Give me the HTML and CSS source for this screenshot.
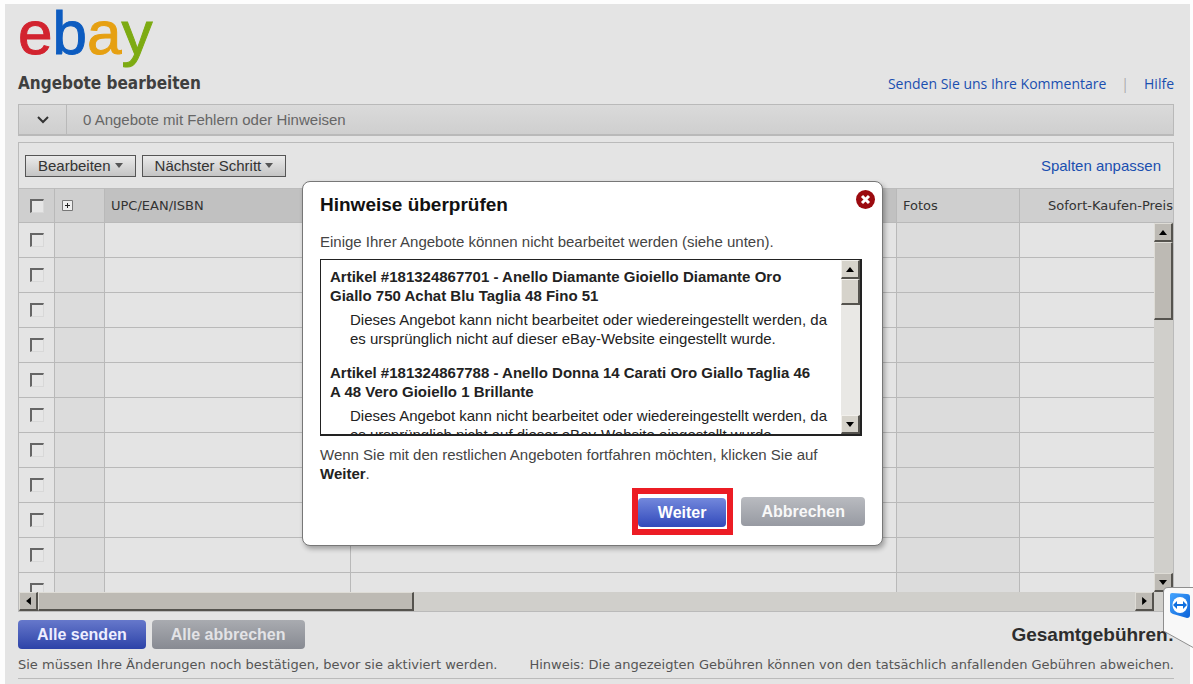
FILE: index.html
```html
<!DOCTYPE html>
<html lang="de">
<head>
<meta charset="utf-8">
<title>Angebote bearbeiten</title>
<link rel="stylesheet" href="styles.css">
</head>
<body>
<div class="page">
  <header class="masthead">
    <div class="logo" role="img" aria-label="ebay"><span class="logo-e">e</span><span class="logo-b">b</span><span class="logo-a">a</span><span class="logo-y">y</span></div>
    <div class="title-row">
      <h1 class="title">Angebote bearbeiten</h1>
      <nav class="links"><a href="#">Senden Sie uns Ihre Kommentare</a><span class="sep">|</span><a href="#">Hilfe</a></nav>
    </div>
  </header>

  <section class="status">
    <button class="status-toggle" type="button" aria-label="Fehler anzeigen"><svg width="14" height="10" viewBox="0 0 14 10"><path d="M2 2l5 5 5-5" fill="none" stroke="#333" stroke-width="2"/></svg></button>
    <span class="status-text">0 Angebote mit Fehlern oder Hinweisen</span>
  </section>

  <section class="panel">
    <div class="toolbar">
      <button class="tool" type="button">Bearbeiten<span class="caret"></span></button>
      <button class="tool" type="button">Nächster Schritt<span class="caret"></span></button>
      <a class="columns-link" href="#">Spalten anpassen</a>
    </div>
    <div class="grid-view">
      <table class="offers">
        <colgroup><col class="c-check"><col class="c-plus"><col class="c-upc"><col><col class="c-foto"><col class="c-price"></colgroup>
        <thead>
          <tr><th><input type="checkbox" aria-label="Alle auswählen"></th><th><button class="expand" type="button" aria-label="Alle erweitern"><svg width="11" height="11" viewBox="0 0 11 11"><path d="M.5.5h10v10H.5z" fill="#eee" stroke="#777"/><path d="M3 5.500h5M5.500 3v5" stroke="#222"/></svg></button></th><th class="label sorted">UPC/EAN/ISBN</th><th class="sorted"></th><th class="label">Fotos</th><th class="label price">Sofort-Kaufen-Preis</th></tr>
        </thead>
        <tbody>
          <tr><td><input type="checkbox" aria-label="Angebot 1"></td><td class="shade"></td><td></td><td></td><td class="shade"></td><td></td></tr>
          <tr><td><input type="checkbox" aria-label="Angebot 2"></td><td class="shade"></td><td></td><td></td><td class="shade"></td><td></td></tr>
          <tr><td><input type="checkbox" aria-label="Angebot 3"></td><td class="shade"></td><td></td><td></td><td class="shade"></td><td></td></tr>
          <tr><td><input type="checkbox" aria-label="Angebot 4"></td><td class="shade"></td><td></td><td></td><td class="shade"></td><td></td></tr>
          <tr><td><input type="checkbox" aria-label="Angebot 5"></td><td class="shade"></td><td></td><td></td><td class="shade"></td><td></td></tr>
          <tr><td><input type="checkbox" aria-label="Angebot 6"></td><td class="shade"></td><td></td><td></td><td class="shade"></td><td></td></tr>
          <tr><td><input type="checkbox" aria-label="Angebot 7"></td><td class="shade"></td><td></td><td></td><td class="shade"></td><td></td></tr>
          <tr><td><input type="checkbox" aria-label="Angebot 8"></td><td class="shade"></td><td></td><td></td><td class="shade"></td><td></td></tr>
          <tr><td><input type="checkbox" aria-label="Angebot 9"></td><td class="shade"></td><td></td><td></td><td class="shade"></td><td></td></tr>
          <tr><td><input type="checkbox" aria-label="Angebot 10"></td><td class="shade"></td><td></td><td></td><td class="shade"></td><td></td></tr>
          <tr><td><input type="checkbox" aria-label="Angebot 11"></td><td class="shade"></td><td></td><td></td><td class="shade"></td><td></td></tr>
        </tbody>
      </table>
      <div class="vbar grid-vbar">
        <button class="arrow" type="button" aria-label="Nach oben"><svg width="8" height="5" viewBox="0 0 10 6"><path d="M5 0l5 6H0z"/></svg></button>
        <div class="thumb"></div>
        <button class="arrow end" type="button" aria-label="Nach unten"><svg width="8" height="5" viewBox="0 0 10 6"><path d="M5 6L0 0h10z"/></svg></button>
      </div>
    </div>
    <div class="hbar">
      <button class="arrow" type="button" aria-label="Nach links"><svg width="5" height="8" viewBox="0 0 6 10"><path d="M0 5l6-5v10z"/></svg></button>
      <div class="thumb"></div>
      <button class="arrow end" type="button" aria-label="Nach rechts"><svg width="5" height="8" viewBox="0 0 6 10"><path d="M6 5L0 0v10z"/></svg></button>
    </div>
  </section>

  <footer class="footer">
    <div class="actions">
      <button class="btn primary" type="button">Alle senden</button>
      <button class="btn" type="button">Alle abbrechen</button>
      <strong class="fees">Gesamtgebühren:</strong>
    </div>
    <div class="notes">
      <span>Sie müssen Ihre Änderungen noch bestätigen, bevor sie aktiviert werden.</span>
      <span>Hinweis: Die angezeigten Gebühren können von den tatsächlich anfallenden Gebühren abweichen.</span>
    </div>
  </footer>
</div>

<div class="overlay">
  <div class="dialog" role="dialog" aria-labelledby="dialog-title">
    <div class="dialog-head">
      <h2 class="dialog-title" id="dialog-title">Hinweise überprüfen</h2>
      <button class="close" type="button" aria-label="Schließen"><svg width="19" height="19" viewBox="0 0 19 19"><circle cx="9.500" cy="9.500" r="9.500" fill="#9b0a0f"/><path d="M6 6l7 7M13 6l-7 7" stroke="#fff" stroke-width="3"/></svg></button>
    </div>
    <p class="dialog-text">Einige Ihrer Angebote können nicht bearbeitet werden (siehe unten).</p>
    <div class="issues">
      <dl class="issue-list">
        <dt>Artikel #181324867701 - Anello Diamante Gioiello Diamante Oro<br>Giallo 750 Achat Blu Taglia 48 Fino 51</dt>
        <dd>Dieses Angebot kann nicht bearbeitet oder wiedereingestellt werden, da<br>es ursprünglich nicht auf dieser eBay-Website eingestellt wurde.</dd>
        <dt>Artikel #181324867788 - Anello Donna 14 Carati Oro Giallo Taglia 46<br>A 48 Vero Gioiello 1 Brillante</dt>
        <dd>Dieses Angebot kann nicht bearbeitet oder wiedereingestellt werden, da<br>es ursprünglich nicht auf dieser eBay-Website eingestellt wurde.</dd>
      </dl>
      <div class="vbar issue-vbar">
        <button class="arrow" type="button" aria-label="Nach oben"><svg width="8" height="5" viewBox="0 0 10 6"><path d="M5 0l5 6H0z"/></svg></button>
        <div class="thumb"></div>
        <button class="arrow end" type="button" aria-label="Nach unten"><svg width="8" height="5" viewBox="0 0 10 6"><path d="M5 6L0 0h10z"/></svg></button>
      </div>
    </div>
    <p class="dialog-text">Wenn Sie mit den restlichen Angeboten fortfahren möchten, klicken Sie auf<br><strong>Weiter</strong>.</p>
    <div class="dialog-actions">
      <div class="marker"><button class="btn primary" type="button">Weiter</button></div>
      <button class="btn" type="button">Abbrechen</button>
    </div>
  </div>
</div>

<div class="remote-tab">
  <svg width="30" height="62" viewBox="0 0 30 62">
    <defs><linearGradient id="tile" x2="1" y2="1"><stop stop-color="#45a5ff"/><stop offset="1" stop-color="#0a62d8"/></linearGradient></defs>
    <path d="M31 .5H5Q.5.500.5 5v39L31 61z" fill="#f8f8f8" stroke="#8e8e8e"/>
    <path d="M9 6l15 1q3 0 3 3v18q0 3-3 3L10 27q-3-1-3-3V8q0-2 2-2z" fill="url(#tile)"/>
    <ellipse cx="17" cy="18" rx="7.500" ry="8" fill="#fff"/>
    <path d="M10 18l4-4v3h6v-3l4 4-4 4v-3h-6v3z" fill="#0f6fdf"/>
  </svg>
</div>
</body>
</html>
```
FILE: styles.css
```css
* { box-sizing: border-box; }

body {
  margin: 0;
  background: #fdfdfd;
  font-family: "Liberation Sans", Arial, sans-serif;
  font-size: 15px;
  color: #444;
  overflow: hidden;
}

button { font-family: inherit; cursor: pointer; }
a { color: #1a4fb0; text-decoration: none; }

.page {
  margin: 4px 3px 0 5px;
  padding: 0 16px 0 13px;
  min-height: 100vh;
  background: #e4e4e4;
}

/* masthead */
.logo { height: 64px; font-size: 62px; line-height: 58px; -webkit-text-stroke: 1px currentColor; }
.logo-e { color: #d2232f; }
.logo-b { color: #0d5cc0; }
.logo-a { color: #e6a012; }
.logo-y { color: #7dab12; }

.title-row { display: flex; justify-content: space-between; align-items: center; height: 30px; }
.title {
  margin: 0;
  font: bold 17px "DejaVu Sans Condensed", "DejaVu Sans", sans-serif;
  color: #3f3f3f;
}
.links { font-family: "Open Sans", sans-serif; font-size: 14px; }
.sep { margin: 0 15px; color: #aaa; }

/* status strip */
.status {
  display: flex;
  align-items: stretch;
  height: 32px;
  margin: 6px 0;
  border: 1px solid #b9b9b9;
  border-bottom-width: 2px;
  background: linear-gradient(#dadada, #cfcfcf);
}
.status-toggle {
  display: flex;
  align-items: center;
  justify-content: center;
  width: 48px;
  padding: 0;
  border: 0;
  border-right: 1px solid #b9b9b9;
  background: none;
}
.status-text { padding-left: 16px; line-height: 30px; color: #666; }

/* table panel */
.panel { border: 1px solid #bababa; }
.toolbar { display: flex; align-items: center; gap: 6px; height: 45px; padding: 0 12px 0 6px; }
.tool {
  display: flex;
  align-items: center;
  gap: 4px;
  height: 22px;
  padding: 0 12px;
  border: 1px solid #555;
  background: linear-gradient(#ebebeb, #c4c4c4);
  font-size: 15px;
  color: #333;
}
.caret { border: 4px solid transparent; border-top: 5px solid #555; border-bottom: 0; }
.columns-link { margin-left: auto; }

.grid-view {
  display: grid;
  grid-template: 35px 369px / 1fr 19px;
  overflow: hidden;
}
.offers {
  grid-area: 1 / 1 / 3 / 3;
  align-self: start;
  width: 100%;
  table-layout: fixed;
  border-collapse: separate;
  border-spacing: 0;
}
.c-check { width: 36px; }
.c-plus { width: 50px; }
.c-upc { width: 246px; }
.c-foto { width: 123px; }
.c-price { width: 153px; }
.offers th, .offers td {
  height: 35px;
  padding: 0;
  border-right: 1px solid #b9b9b9;
  border-bottom: 1px solid #b9b9b9;
  text-align: center;
  vertical-align: middle;
}
.offers tr > :last-child { border-right: 0; }
.offers th { border-top: 1px solid #bcbcbc; background: #cfcfcf; }
.offers th.sorted { background: #c1c1c1; }
.offers th.label {
  padding-left: 6px;
  font: 13px "DejaVu Sans", Verdana, sans-serif;
  color: #333;
  text-align: left;
}
.offers th.price { padding: 0; text-align: right; white-space: nowrap; }
.shade { background: #dcdcdc; }
.offers input {
  appearance: none;
  display: block;
  width: 14px;
  height: 14px;
  margin: 0 auto;
  border: 1px solid #d8d8d8;
  border-top: 2px solid #666;
  border-left: 2px solid #666;
  background: #e6e6e6;
}
.expand { display: block; margin-left: 7px; padding: 0; border: 0; background: none; line-height: 0; }

/* scroll bars */
.vbar, .hbar { display: flex; background: #d0cfcb; }
.vbar { flex-direction: column; }
.arrow {
  display: flex;
  flex: none;
  align-items: center;
  justify-content: center;
  width: 19px;
  height: 19px;
  padding: 0;
}
.arrow, .thumb {
  border: 1px solid #dedcd6;
  border-right: 2px solid #55534e;
  border-bottom: 2px solid #55534e;
  background: #bdbab4;
}
.end { margin: auto 0 0; }
.grid-vbar { grid-area: 2 / 2; }
.grid-vbar .thumb { height: 78px; }
.hbar { height: 19px; padding-right: 19px; }
.hbar .thumb { width: 376px; }
.hbar .end { margin: 0 0 0 auto; }

/* footer */
.actions { display: flex; gap: 6px; height: 45px; align-items: center; }
.btn {
  height: 29px;
  padding: 0 19px;
  border: 0;
  border-radius: 4px;
  background: linear-gradient(#a9abb0, #878a92);
  font-size: 16px;
  font-weight: bold;
  color: #e3e3e6;
}
.primary { background: linear-gradient(#6678cb, #2d43a8); color: #eef; }
.fees { margin-left: auto; font-size: 19px; color: #2d2d2d; }
.notes {
  display: flex;
  justify-content: space-between;
  height: 22px;
  border-bottom: 1px solid #bbb;
  font: 13px "DejaVu Sans", Verdana, sans-serif;
  color: #555;
  white-space: nowrap;
}

/* dialog */
.overlay {
  position: absolute;
  inset: 181px 8px auto 0;
  display: flex;
  justify-content: center;
}
.dialog {
  width: 581px;
  padding: 8px 17px 10px;
  border: 1px solid #777;
  border-radius: 8px;
  background: #fff;
  box-shadow: 2px 3px 5px rgba(0, 0, 0, .3);
}
.dialog-head { display: flex; justify-content: space-between; height: 42px; }
.dialog-title { margin: 0; font-size: 19px; line-height: 30px; color: #111; }
.close { align-self: flex-start; margin-right: -10px; padding: 0; border: 0; background: none; line-height: 0; }
.dialog-text { margin: 0; line-height: 19px; }
.dialog-text strong { color: #222; }
.issues {
  display: flex;
  height: 177px;
  width: 542px;
  max-width: 100%;
  margin: 8px 0 9px;
  border: 1px solid #222;
  border-right-width: 2px;
  border-bottom-width: 2px;
  overflow: hidden;
}
.issue-list { flex: 1; margin: 0; padding: 7px 0 0 9px; line-height: 19px; color: #222; white-space: nowrap; }
.issue-list dt { font-weight: bold; }
.issue-list dd { margin: 5px 0 15px 20px; }
.issue-vbar { width: 19px; background: #e9e8e5; }
.issue-vbar .arrow, .issue-vbar .thumb { background: #d6d3cb; border-color: #f2f0ec #55534e #55534e #f2f0ec; }
.issue-vbar .thumb { height: 26px; }
.dialog-actions { display: flex; justify-content: flex-end; align-items: center; gap: 8px; margin-top: 5px; }
.marker { display: flex; padding: 4px 1px 2px 0; border: 6px solid #ec1c24; }
.dialog .btn { padding: 0 20px; }
.dialog .primary { background: linear-gradient(#7388dc, #3149bb); color: #fff; }
.dialog .btn:not(.primary) { background: linear-gradient(#b9bbc0, #979aa2); color: #f8f8f8; }

/* remote support tab */
.remote-tab { position: absolute; top: 587px; right: 0; line-height: 0; }
```
